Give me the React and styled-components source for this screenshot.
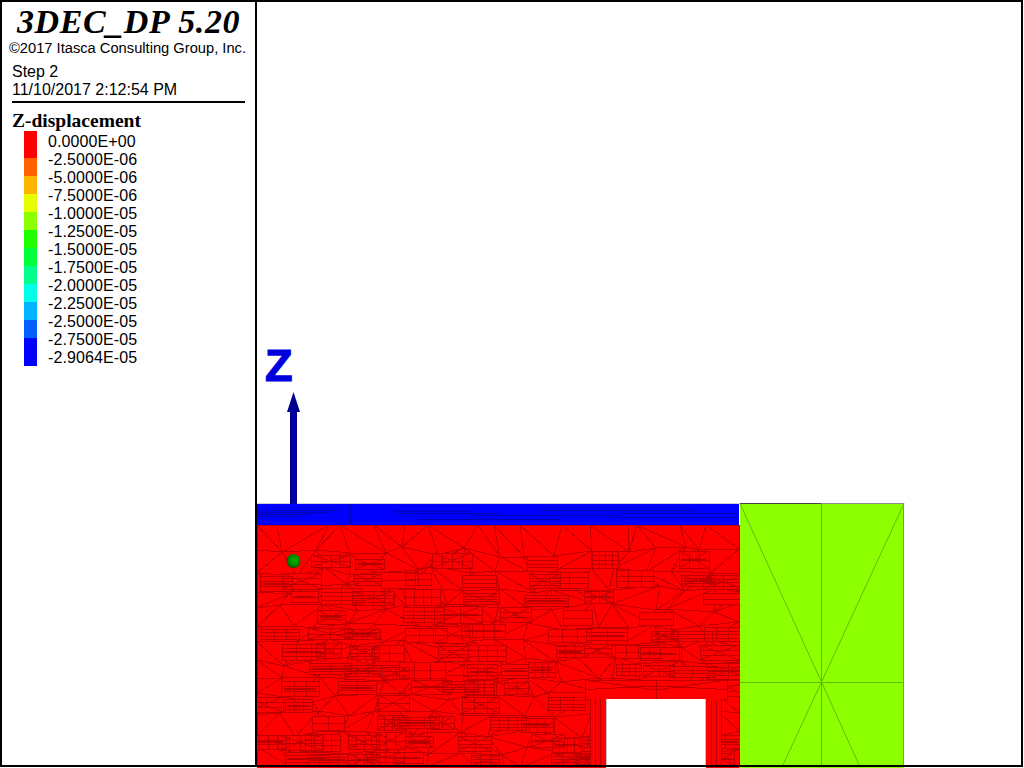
import React, { useMemo } from 'react'
import styled, { createGlobalStyle } from 'styled-components'

const legend = ['0.0000E+00', '-2.5000E-06', '-5.0000E-06', '-7.5000E-06', '-1.0000E-05', '-1.2500E-05', '-1.5000E-05', '-1.7500E-05', '-2.0000E-05', '-2.2500E-05', '-2.5000E-05', '-2.7500E-05', '-2.9064E-05']
const bands = [
  ['#ff0000', 27], ['#ff6000', 18], ['#ffb400', 18], ['#e6ff00', 18], ['#8cff00', 18], ['#1eff00', 18],
  ['#00ff3c', 18], ['#00ff8c', 18], ['#00ffe6', 18], ['#00b4ff', 18], ['#0060ff', 18], ['#0000ff', 28],
]

const Global = createGlobalStyle`
  html, body { margin: 0; padding: 0; background: #fff; overflow: hidden; }
`
const Page = styled.div`
  width: 1024px;
  height: 768px;
  background: #fff;
  overflow: hidden;
`
const Frame = styled.div`
  box-sizing: border-box;
  width: 1023px;
  height: 767px;
  border: 2px solid #000;
  display: flex;
`
const Side = styled.aside`
  box-sizing: border-box;
  width: 255px;
  flex: none;
  border-right: 2px solid #000;
  display: flex;
  flex-direction: column;
  color: #000;
  font-family: "Liberation Sans", Arial, sans-serif;
`
const Title = styled.h1`
  margin: 2px 0 0;
  text-align: center;
  font: italic bold 34px/36px "Liberation Serif", "Times New Roman", serif;
  letter-spacing: 0.6px;
`
const Copy = styled.div`
  padding-left: 7px;
  font-size: 14.7px;
  line-height: 16px;
  white-space: nowrap;
`
const Meta = styled.div`
  margin: 7px 0 0 10px;
  width: 233px;
  height: 38px;
  border-bottom: 2px solid #000;
  font-size: 16px;
  line-height: 18px;
`
const LegendTitle = styled.h2`
  margin: 8px 0 0 10px;
  font: bold 19.5px/20px "Liberation Serif", "Times New Roman", serif;
`
const Legend = styled.div`
  display: flex;
  margin: 0 0 0 22px;
`
const Scale = styled.div`
  width: 13px;
  display: flex;
  flex-direction: column;
`
const Band = styled.div`
  height: ${p => p.$h}px;
  background: ${p => p.$c};
`
const Labels = styled.div`
  margin: 2px 0 0 11px;
`
const Label = styled.div`
  font-size: 16px;
  line-height: 18px;
  letter-spacing: 0.1px;
  white-space: nowrap;
`
const Plot = styled.svg`
  display: block;
  flex: 1;
  width: 764px;
  height: 763px;
`
const ZMark = styled.text`
  font: bold 45px "Liberation Sans", Arial, sans-serif;
  fill: #0000dc;
  stroke: #0000dc;
  stroke-width: 1.2px;
  shape-rendering: auto;
`
const Bleed = styled.div`
  display: flex;
  height: 1px;
  margin-left: 257px;
`
const BleedPart = styled.div`
  width: ${p => p.$w}px;
  background: ${p => p.$c};
`

function rng(seed) {
  let a = seed
  return () => {
    a = (a + 0x6d2b79f5) | 0
    let t = Math.imul(a ^ (a >>> 15), 1 | a)
    t = (t + Math.imul(t ^ (t >>> 7), 61 | t)) ^ t
    return ((t ^ (t >>> 14)) >>> 0) / 4294967296
  }
}

// rough block mesh: jittered triangles with small subdivided rectangles laid between them
function buildMesh() {
  const r = rng(20171110)
  const rows = [525, 552, 571, 589, 607, 625, 643, 661, 679, 697, 715, 733, 750, 767]
  const cols = 16
  const x0 = 257, x1 = 739
  const dx = (x1 - x0) / cols
  const pts = rows.map((y, j) => {
    const row = []
    for (let i = 0; i <= cols; i++) {
      const edgeX = i === 0 || i === cols
      const edgeY = j === 0 || j === rows.length - 1
      row.push([
        Math.round(x0 + i * dx + (edgeX ? 0 : (r() - 0.5) * dx * 0.8)),
        Math.round(y + (edgeY ? 0 : (r() - 0.5) * 10)),
      ])
    }
    return row
  })
  let tri = ''
  let bars = ''
  let heavy = ''
  const rects = []
  for (let j = 0; j < rows.length - 1; j++) {
    for (let i = 0; i < cols; i++) {
      const a = pts[j][i], b = pts[j][i + 1], c = pts[j + 1][i + 1], d = pts[j + 1][i]
      tri += `M${a[0]} ${a[1]}L${b[0]} ${b[1]}M${a[0]} ${a[1]}L${d[0]} ${d[1]}`
      if (i === cols - 1) tri += `M${b[0]} ${b[1]}L${c[0]} ${c[1]}`
      tri += r() < 0.5 ? `M${a[0]} ${a[1]}L${c[0]} ${c[1]}` : `M${b[0]} ${b[1]}L${d[0]} ${d[1]}`
      const cx = Math.round((a[0] + b[0] + c[0] + d[0]) / 4 + (r() - 0.5) * 12)
      const cy = Math.round((a[1] + b[1] + c[1] + d[1]) / 4)
      if (j === 0 || r() > (j === 1 ? 0.35 : 0.62)) continue
      const w = 24 + Math.round(r() * 22)
      const h = 10 + Math.round(r() * 7)
      const x = cx - Math.round(w / 2)
      const y = cy - Math.round(h / 2)
      rects.push(`M${x} ${y}h${w}v${h}h${-w}z`)
      const n = 1 + Math.floor(r() * 3)
      for (let k = 1; k <= n; k++) bars += `M${x} ${y + Math.round((h * k) / (n + 1))}h${w}`
      const v = Math.floor(r() * 4)
      for (let k = 1; k <= v; k++) bars += `M${x + Math.round((w * k) / (v + 1))} ${y}v${h}`
      if (r() < 0.5) bars += `M${x} ${y}L${x + w} ${y + h}M${x + w} ${y}L${x} ${y + h}`
      if (r() < 0.3) heavy += `M${x + 3} ${y + Math.round(h / 2)}h${w - 6}`
    }
  }
  return { tri, bars, heavy, rects: rects.join('') }
}

function Model() {
  const mesh = useMemo(buildMesh, [])
  const line = '#c00000'
  return (
    <Plot viewBox="257 2 764 763" shapeRendering="crispEdges">
      <defs>
        <linearGradient id="shaft" x1="0" x2="1" y1="0" y2="0">
          <stop offset="0" stopColor="#000078" />
          <stop offset="0.5" stopColor="#0000c0" />
          <stop offset="1" stopColor="#000078" />
        </linearGradient>
        <radialGradient id="ball" cx="0.55" cy="0.45" r="0.6">
          <stop offset="0" stopColor="#00b000" />
          <stop offset="0.6" stopColor="#008a00" />
          <stop offset="1" stopColor="#004c00" />
        </radialGradient>
      </defs>

      <rect x="257" y="525" width="482" height="242" fill="#f00" />
      <path d={mesh.tri} fill="none" stroke={line} />
      <path d={mesh.rects} fill="#f00" stroke={line} />
      <path d={mesh.bars} fill="none" stroke={line} />
      <path d={mesh.heavy} fill="none" stroke="#b80000" strokeWidth="2" />

      <rect x="585" y="680" width="142" height="19" fill="#f00" />
      <path d="M585 680.5H727M585 699.5H727M585 680V699M727 680V699M585 689.5L656 686L727 689.5M585 680L656 690L727 680M656.5 680V699" fill="none" stroke={line} />
      <rect x="590" y="699" width="16" height="68" fill="#f00" />
      <rect x="706" y="699" width="16" height="68" fill="#f00" />
      <path d="M590.5 699V767M596 699L595 767M601 699L600 767M711 699L712 767M716 699L717 767M721.5 699V767" fill="none" stroke={line} />
      <rect x="606" y="699" width="100" height="68" fill="#fff" />
      <path d="M606.5 699V767M705.5 699V767" stroke="#c4c4c4" fill="none" />

      <rect x="257" y="503" width="482" height="1" fill="#cfcfcf" />
      <rect x="257" y="504" width="482" height="21" fill="#00f" />
      <path d="M257 510.5H340M257 512.5H330M257 514.5H312M257 516.5H300M350.5 504V525M395 513.5H500M395 511.5H470M470 515.5H620M540 510.5H700M620 513.5H739M610 517.5H739M420 519.5H560" fill="none" stroke="#0000b4" />

      <rect x="740" y="503" width="164" height="264" fill="#8cff00" />
      <path d="M740 503.5L821.5 682L904 503.5M821.5 682L782 767M821.5 682L860 767M821.5 503V767M740 682.5H904M903.5 503V767" fill="none" stroke="#66bb00" shapeRendering="auto" />
      <path d="M740 503.5H821" stroke="#444" fill="none" />
      <path d="M821 503.5H904" stroke="#8c8c8c" fill="none" />

      <circle cx="293.5" cy="561" r="7" fill="url(#ball)" shapeRendering="auto" />

      <rect x="290" y="411" width="7" height="93" fill="url(#shaft)" />
      <path d="M293.5 392L300 412H287Z" fill="#000090" shapeRendering="auto" />
      <ZMark x="265" y="381">Z</ZMark>
    </Plot>
  )
}

export default function App() {
  return (
    <Page>
      <Global />
      <Frame>
        <Side>
          <Title>3DEC_DP 5.20</Title>
          <Copy>©2017 Itasca Consulting Group, Inc.</Copy>
          <Meta>
            <div>Step 2</div>
            <div>11/10/2017 2:12:54 PM</div>
          </Meta>
          <LegendTitle>Z-displacement</LegendTitle>
          <Legend>
            <Scale>
              {bands.map(([c, h]) => <Band key={c} $c={c} $h={h} />)}
            </Scale>
            <Labels>
              {legend.map(t => <Label key={t}>{t}</Label>)}
            </Labels>
          </Legend>
        </Side>
        <Model />
      </Frame>
      <Bleed>
        <BleedPart $w={349} $c="#f00" />
        <BleedPart $w={100} $c="#fff" />
        <BleedPart $w={33} $c="#f00" />
        <BleedPart $w={165} $c="#8cff00" />
      </Bleed>
    </Page>
  )
}
